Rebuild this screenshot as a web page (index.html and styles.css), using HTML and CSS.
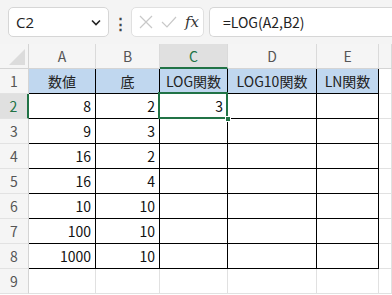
FILE: index.html
```html
<!DOCTYPE html>
<html lang="ja">
  <head>
    <meta charset="UTF-8" />
    <title>LOG関数</title>
    <link rel="stylesheet" href="styles.css">
  </head>
  <body>
    <div class="formula-bar">
      <div class="name-box">
        <span>C2</span>
        <svg class="chev" width="10" height="7" viewBox="0 0 10 7"><path d="M1 1.5 L5 5.5 L9 1.5" fill="none" stroke="#222" stroke-width="1.6"/></svg>
      </div>
      <div class="dots">⋮</div>
      <div class="fx-box">
        <svg width="14" height="14" viewBox="0 0 14 14"><path d="M1 1 L13 13 M13 1 L1 13" stroke="#c8c8c8" stroke-width="1.2"/></svg>
        <svg width="16" height="12" viewBox="0 0 16 12"><path d="M1 6 L6 11 L15 1" fill="none" stroke="#c8c8c8" stroke-width="1.2"/></svg>
        <span class="fx">fx</span>
      </div>
      <div class="formula">=LOG(A2,B2)</div>
    </div>

    <div class="sheet">
      <div class="corner"><span class="tri"></span></div>
      <div class="col-head">A</div>
      <div class="col-head">B</div>
      <div class="col-head active">C</div>
      <div class="col-head">D</div>
      <div class="col-head">E</div>
      <div class="col-head"></div>

      <div class="row-head">1</div>
      <div class="cell data title">数値</div>
      <div class="cell data title">底</div>
      <div class="cell data title">LOG関数</div>
      <div class="cell data title">LOG10関数</div>
      <div class="cell data title">LN関数</div>
      <div class="cell"></div>

      <div class="row-head active">2</div>
      <div class="cell data num">8</div>
      <div class="cell data num">2</div>
      <div class="cell data num selected">3<span class="handle"></span></div>
      <div class="cell data"></div>
      <div class="cell data"></div>
      <div class="cell"></div>

      <div class="row-head">3</div>
      <div class="cell data num">9</div>
      <div class="cell data num">3</div>
      <div class="cell data"></div>
      <div class="cell data"></div>
      <div class="cell data"></div>
      <div class="cell"></div>

      <div class="row-head">4</div>
      <div class="cell data num">16</div>
      <div class="cell data num">2</div>
      <div class="cell data"></div>
      <div class="cell data"></div>
      <div class="cell data"></div>
      <div class="cell"></div>

      <div class="row-head">5</div>
      <div class="cell data num">16</div>
      <div class="cell data num">4</div>
      <div class="cell data"></div>
      <div class="cell data"></div>
      <div class="cell data"></div>
      <div class="cell"></div>

      <div class="row-head">6</div>
      <div class="cell data num">10</div>
      <div class="cell data num">10</div>
      <div class="cell data"></div>
      <div class="cell data"></div>
      <div class="cell data"></div>
      <div class="cell"></div>

      <div class="row-head">7</div>
      <div class="cell data num">100</div>
      <div class="cell data num">10</div>
      <div class="cell data"></div>
      <div class="cell data"></div>
      <div class="cell data"></div>
      <div class="cell"></div>

      <div class="row-head">8</div>
      <div class="cell data num">1000</div>
      <div class="cell data num">10</div>
      <div class="cell data"></div>
      <div class="cell data"></div>
      <div class="cell data"></div>
      <div class="cell"></div>

      <div class="row-head">9</div>
      <div class="cell"></div>
      <div class="cell"></div>
      <div class="cell"></div>
      <div class="cell"></div>
      <div class="cell"></div>
      <div class="cell"></div>
    </div>
  </body>
</html>
```

FILE: styles.css
```css
* {
  box-sizing: border-box;
}
body {
  margin: 0;
  width: 392px;
  height: 295px;
  overflow: hidden;
  background: #fff;
  font-family: "Noto Sans CJK JP", "Noto Sans", sans-serif;
  color: #111;
}
.formula-bar {
  height: 44px;
  background: #f4f4f4;
  display: flex;
  align-items: center;
  padding: 0 0 0 8px;
}
.name-box {
  width: 101px;
  height: 30px;
  background: #fff;
  border: 1px solid #d6d6d6;
  border-radius: 5px;
  display: flex;
  align-items: center;
  justify-content: space-between;
  padding: 0 7px 0 7px;
  font-family: "Open Sans", "Noto Sans", sans-serif;
  font-size: 15px;
  color: #222;
}
.dots {
  width: 22px;
  text-align: center;
  font-size: 15px;
  font-weight: bold;
  color: #444;
}
.fx-box {
  width: 73px;
  height: 30px;
  background: #fff;
  border: 1px solid #e0e0e0;
  border-radius: 5px;
  display: flex;
  align-items: center;
  justify-content: space-between;
  padding: 0 4px 0 7px;
}
.fx {
  font-family: "DejaVu Serif", "Liberation Serif", serif;
  font-style: italic;
  font-size: 15px;
  color: #333;
}
.formula {
  flex: 1;
  height: 30px;
  margin-left: 5px;
  background: #fff;
  border: 1px solid #d6d6d6;
  border-right: none;
  border-radius: 5px 0 0 5px;
  display: flex;
  align-items: center;
  padding-left: 13px;
  font-size: 14px;
  color: #222;
}
.sheet {
  display: grid;
  grid-template-columns: 29px 67px 64px 68px 89px 62px 13px;
  grid-template-rows: repeat(10, 25px);
  font-size: 14px;
}
.corner {
  background: #f5f5f5;
  border-right: 1px solid #d4d4d4;
  border-bottom: 1px solid #d4d4d4;
  position: relative;
}
.tri {
  position: absolute;
  right: 3px;
  bottom: 3px;
  width: 0;
  height: 0;
  border-left: 16px solid transparent;
  border-bottom: 16px solid #dcdcdc;
}
.col-head {
  background: #f5f5f5;
  border-right: 1px solid #dadada;
  border-bottom: 1px solid #d4d4d4;
  display: flex;
  align-items: center;
  justify-content: center;
  color: #555;
}
.col-head.active {
  background: #e0e0e0;
  color: #217346;
  border-bottom: 2px solid #217346;
}
.row-head {
  background: #f5f5f5;
  border-right: 1px solid #d4d4d4;
  border-bottom: 1px solid #e2e2e2;
  display: flex;
  align-items: center;
  justify-content: center;
  color: #555;
}
.row-head.active {
  background: #e0e0e0;
  color: #217346;
  border-right: 2px solid #217346;
}
.cell {
  border-right: 1px solid #e1e1e1;
  border-bottom: 1px solid #e1e1e1;
  display: flex;
  align-items: center;
  padding: 0 4px;
  white-space: nowrap;
}
.cell.data {
  border-right-color: #000;
  border-bottom-color: #000;
}
.title {
  background: #c0d7ef;
  justify-content: center;
  color: #222;
}
.num {
  justify-content: flex-end;
}
.selected {
  position: relative;
}
.selected::after {
  content: "";
  position: absolute;
  left: -2px;
  top: -2px;
  right: -1px;
  bottom: -1px;
  border: 2px solid #217346;
}
.handle {
  position: absolute;
  right: -4px;
  bottom: -4px;
  width: 6px;
  height: 6px;
  background: #217346;
  border: 1px solid #fff;
  z-index: 1;
}
```
